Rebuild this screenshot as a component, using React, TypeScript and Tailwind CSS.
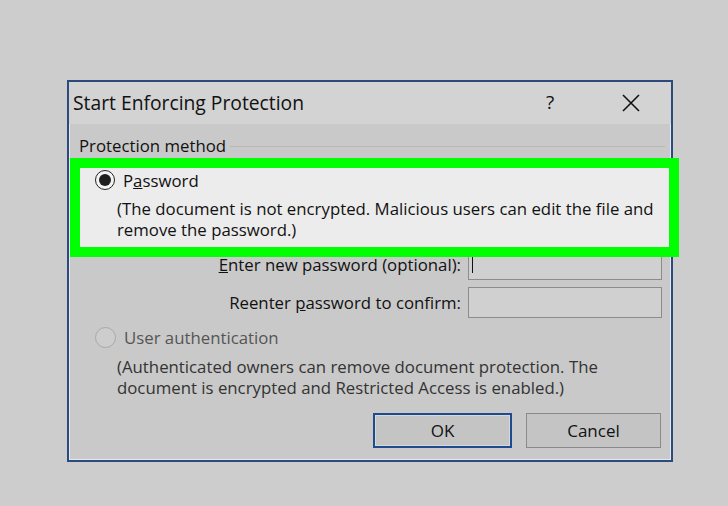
import React from "react";

const font = { fontFamily: '"Open Sans", "Noto Sans", sans-serif' };

export default function App() {
  return (
    <div className="w-[728px] h-[506px] bg-[#cdcdcd] pt-[80px] pl-[67px]" style={font}>
      <div className="w-[606px] h-[382px] border-2 border-[#2c4a7d] bg-[#c9c9c9] flex flex-col shadow-[inset_0_0_0_1px_#e4e8ef]">
        <div className="h-[42px] bg-[#d3d3d3] flex items-center pl-[4px] text-[19.3px] text-[#111] relative">
          <span>Start Enforcing Protection</span>
          <span className="absolute left-[477px] top-[6px] text-[19px]">?</span>
          <svg className="absolute left-[553px] top-[12px]" width="18" height="18" viewBox="0 0 18 18">
            <path d="M1 1 L17 17 M17 1 L1 17" stroke="#111" strokeWidth="1.6" />
          </svg>
        </div>
        <div className="flex items-center pl-[10px] pr-[6px] mt-[9px] text-[16.8px] text-[#111]">
          <span>Protection method</span>
          <div className="flex-1 h-px bg-[#b8b8b8] ml-[4px] mt-[2px]" />
        </div>
        <div className="relative mt-[10px] ml-[12px] w-[588px] h-[76px]">
          <div className="absolute left-[-11px] top-[-10px] w-[609px] h-[99px] border-[10px] border-[#00ff00] bg-[#ececec]" />
          <div className="relative pl-[14px] pt-[1px]">
            <div className="flex items-center h-[22px]">
              <span className="w-[20px] h-[20px] rounded-full border-[1.5px] border-[#222] flex items-center justify-center bg-[#f4f4f4]">
                <span className="w-[12px] h-[12px] rounded-full bg-[#1e1e1e]" />
              </span>
              <span className="ml-[8px] text-[16.8px] text-[#111]">P<span className="underline">a</span>ssword</span>
            </div>
            <div className="pl-[22px] mt-[7px] text-[16.8px] leading-[21px] text-[#111]">
              <div>(The document is not encrypted. Malicious users can edit the file and</div>
              <div>remove the password.)</div>
            </div>
          </div>
        </div>
        <div className="mt-[5px] flex flex-col gap-[7px] text-[16.8px] text-[#111]">
          <div className="flex items-center justify-end pr-[9px] h-[31px]">
            <span className="mr-[7px]"><span className="underline">E</span>nter new password (optional):</span>
            <div className="w-[194px] h-[30px] border border-[#8c8c8c] bg-[#d0d0d0] flex items-center pl-[3px]">
              <div className="w-px h-[17px] bg-[#111]" />
            </div>
          </div>
          <div className="flex items-center justify-end pr-[9px] h-[31px]">
            <span className="mr-[7px]">Reenter <span className="underline">p</span>assword to confirm:</span>
            <div className="w-[194px] h-[31px] border border-[#8c8c8c] bg-[#d0d0d0]" />
          </div>
        </div>
        <div className="flex items-center pl-[26px] mt-[7px] h-[24px]">
          <span className="w-[21px] h-[21px] rounded-full border border-[#a8a8a8] bg-[#cdcdcd]" />
          <span className="ml-[8px] text-[16.8px] text-[#555]">User authentication</span>
        </div>
        <div className="pl-[48px] mt-[7px] text-[16.8px] leading-[21px] text-[#333]">
          <div>(Authenticated owners can remove document protection. The</div>
          <div>document is encrypted and Restricted Access is enabled.)</div>
        </div>
        <div className="flex justify-end gap-[14px] pr-[10px] mt-[15px]">
          <button className="w-[139px] h-[35px] border-2 border-[#1e4a8f] bg-[#c4c4c4] text-[17px] text-[#111] shadow-[inset_0_0_0_1px_#d8d8d8]">OK</button>
          <button className="w-[135px] h-[35px] border border-[#8a8a8a] bg-[#c4c4c4] text-[17px] text-[#111]">Cancel</button>
        </div>
      </div>
    </div>
  );
}
